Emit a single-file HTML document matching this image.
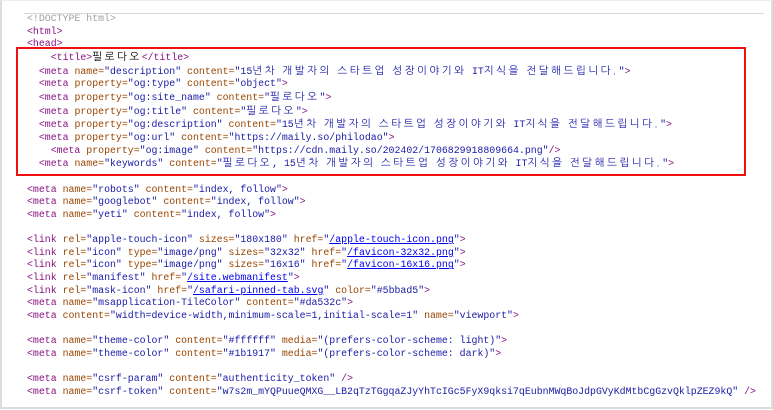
<!DOCTYPE html>
<html><head><meta charset="utf-8"><style>
html,body{margin:0;padding:0;background:#fff;width:773px;height:410px;overflow:hidden;}
.frame{position:absolute;left:0;top:0;width:769px;height:406px;border:2px solid #dcdcdc;border-top:1px solid #eee;}
.topline{position:absolute;left:24px;top:13px;width:740px;height:1px;background:#d8d8d8;}
.red{position:absolute;left:16px;top:47px;width:726px;height:125px;border:2px solid #f01010;}
pre{position:absolute;left:27px;top:13px;margin:0;font-family:"Liberation Mono","NanumGothic",monospace;font-size:9.9px;line-height:12.65px;color:#1a1aa6;}
.t{color:#881280}.a{color:#994500}.v{color:#1a1aa6}.d{color:#a0a0a0}
.k{font-family:"NanumGothic","Noto Sans CJK KR",sans-serif;font-size:10.5px;letter-spacing:2.5px}
u{color:#0000ee}
</style></head><body>
<div class="frame"></div><div class="topline"></div>
<pre><span class="d">&lt;!DOCTYPE html&gt;</span>
<span class="t">&lt;html&gt;</span>
<span class="t">&lt;head&gt;</span>
    <span class="t">&lt;title&gt;</span><span style="color:#000" class="k">필로다오</span><span class="t">&lt;/title&gt;</span>
  <span class="t">&lt;meta</span> <span class="a">name=</span>"description" <span class="a">content=</span>"15<span class="k">년차 개발자의 스타트업 성장이야기와 </span>IT<span class="k">지식을 전달해드립니다.</span>"<span class="t">&gt;</span>
  <span class="t">&lt;meta</span> <span class="a">property=</span>"og:type" <span class="a">content=</span>"object"<span class="t">&gt;</span>
  <span class="t">&lt;meta</span> <span class="a">property=</span>"og:site_name" <span class="a">content=</span>"<span class="k">필로다오</span>"<span class="t">&gt;</span>
  <span class="t">&lt;meta</span> <span class="a">property=</span>"og:title" <span class="a">content=</span>"<span class="k">필로다오</span>"<span class="t">&gt;</span>
  <span class="t">&lt;meta</span> <span class="a">property=</span>"og:description" <span class="a">content=</span>"15<span class="k">년차 개발자의 스타트업 성장이야기와 </span>IT<span class="k">지식을 전달해드립니다.</span>"<span class="t">&gt;</span>
  <span class="t">&lt;meta</span> <span class="a">property=</span>"og:url" <span class="a">content=</span>"https://maily.so/philodao"<span class="t">&gt;</span>
    <span class="t">&lt;meta</span> <span class="a">property=</span>"og:image" <span class="a">content=</span>"https://cdn.maily.so/202402/1706829918809664.png"<span class="t">/&gt;</span>
  <span class="t">&lt;meta</span> <span class="a">name=</span>"keywords" <span class="a">content=</span>"<span class="k">필로다오</span>, 15<span class="k">년차 개발자의 스타트업 성장이야기와 </span>IT<span class="k">지식을 전달해드립니다.</span>"<span class="t">&gt;</span>

<span class="t">&lt;meta</span> <span class="a">name=</span>"robots" <span class="a">content=</span>"index, follow"<span class="t">&gt;</span>
<span class="t">&lt;meta</span> <span class="a">name=</span>"googlebot" <span class="a">content=</span>"index, follow"<span class="t">&gt;</span>
<span class="t">&lt;meta</span> <span class="a">name=</span>"yeti" <span class="a">content=</span>"index, follow"<span class="t">&gt;</span>

<span class="t">&lt;link</span> <span class="a">rel=</span>"apple-touch-icon" <span class="a">sizes=</span>"180x180" <span class="a">href=</span>"<u>/apple-touch-icon.png</u>"<span class="t">&gt;</span>
<span class="t">&lt;link</span> <span class="a">rel=</span>"icon" <span class="a">type=</span>"image/png" <span class="a">sizes=</span>"32x32" <span class="a">href=</span>"<u>/favicon-32x32.png</u>"<span class="t">&gt;</span>
<span class="t">&lt;link</span> <span class="a">rel=</span>"icon" <span class="a">type=</span>"image/png" <span class="a">sizes=</span>"16x16" <span class="a">href=</span>"<u>/favicon-16x16.png</u>"<span class="t">&gt;</span>
<span class="t">&lt;link</span> <span class="a">rel=</span>"manifest" <span class="a">href=</span>"<u>/site.webmanifest</u>"<span class="t">&gt;</span>
<span class="t">&lt;link</span> <span class="a">rel=</span>"mask-icon" <span class="a">href=</span>"<u>/safari-pinned-tab.svg</u>" <span class="a">color=</span>"#5bbad5"<span class="t">&gt;</span>
<span class="t">&lt;meta</span> <span class="a">name=</span>"msapplication-TileColor" <span class="a">content=</span>"#da532c"<span class="t">&gt;</span>
<span class="t">&lt;meta</span> <span class="a">content=</span>"width=device-width,minimum-scale=1,initial-scale=1" <span class="a">name=</span>"viewport"<span class="t">&gt;</span>

<span class="t">&lt;meta</span> <span class="a">name=</span>"theme-color" <span class="a">content=</span>"#ffffff" <span class="a">media=</span>"(prefers-color-scheme: light)"<span class="t">&gt;</span>
<span class="t">&lt;meta</span> <span class="a">name=</span>"theme-color" <span class="a">content=</span>"#1b1917" <span class="a">media=</span>"(prefers-color-scheme: dark)"<span class="t">&gt;</span>

<span class="t">&lt;meta</span> <span class="a">name=</span>"csrf-param" <span class="a">content=</span>"authenticity_token" <span class="t">/&gt;</span>
<span class="t">&lt;meta</span> <span class="a">name=</span>"csrf-token" <span class="a">content=</span>"w7s2m_mYQPuueQMXG__LB2qTzTGgqaZJyYhTcIGc5FyX9qksi7qEubnMWqBoJdpGVyKdMtbCgGzvQklpZEZ9kQ" <span class="t">/&gt;</span></pre>
<div class="red"></div>
</body></html>
